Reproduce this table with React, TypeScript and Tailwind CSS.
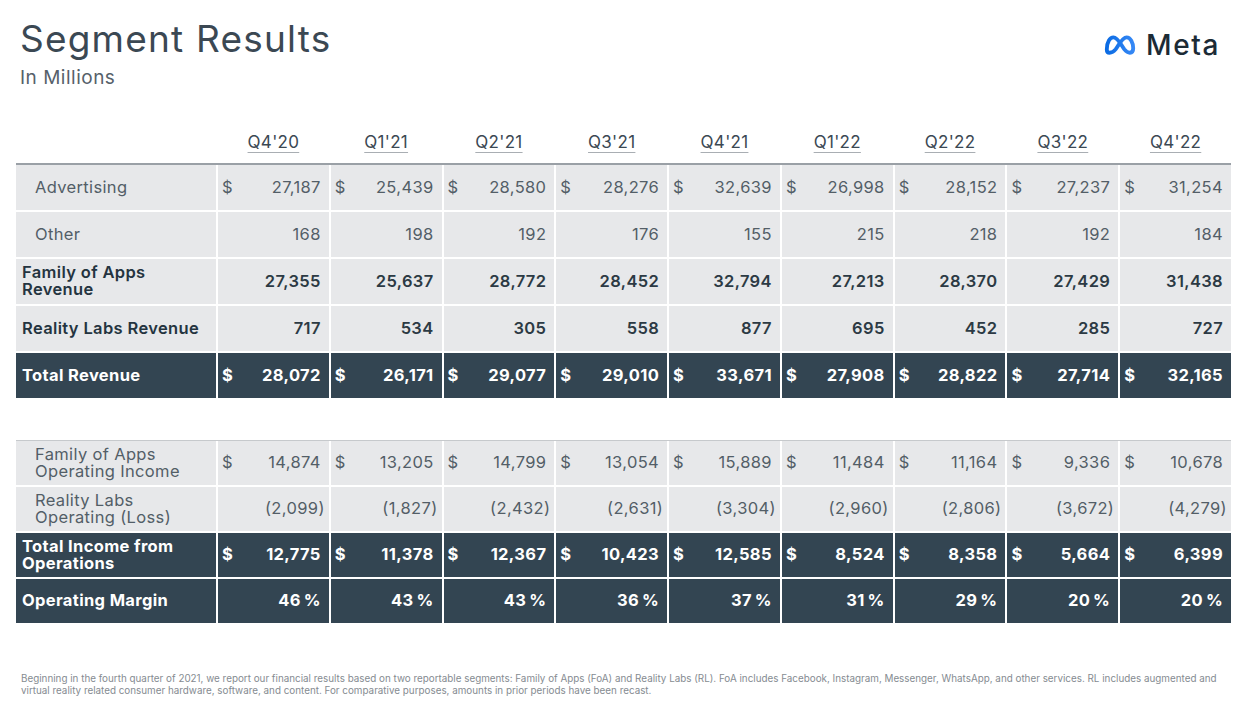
import React from "react"

const quarters = ["Q4'20", "Q1'21", "Q2'21", "Q3'21", "Q4'21", "Q1'22", "Q2'22", "Q3'22", "Q4'22"]

type Row = {
  label: string[]
  values: string[]
  dollar?: boolean
  kind: "sub" | "bold" | "dark"
}

const revenueRows: Row[] = [
  {
    label: ["Advertising"],
    kind: "sub",
    dollar: true,
    values: ["27,187", "25,439", "28,580", "28,276", "32,639", "26,998", "28,152", "27,237", "31,254"],
  },
  {
    label: ["Other"],
    kind: "sub",
    values: ["168", "198", "192", "176", "155", "215", "218", "192", "184"],
  },
  {
    label: ["Family of Apps", "Revenue"],
    kind: "bold",
    values: ["27,355", "25,637", "28,772", "28,452", "32,794", "27,213", "28,370", "27,429", "31,438"],
  },
  {
    label: ["Reality Labs Revenue"],
    kind: "bold",
    values: ["717", "534", "305", "558", "877", "695", "452", "285", "727"],
  },
  {
    label: ["Total Revenue"],
    kind: "dark",
    dollar: true,
    values: ["28,072", "26,171", "29,077", "29,010", "33,671", "27,908", "28,822", "27,714", "32,165"],
  },
]

const incomeRows: Row[] = [
  {
    label: ["Family of Apps", "Operating Income"],
    kind: "sub",
    dollar: true,
    values: ["14,874", "13,205", "14,799", "13,054", "15,889", "11,484", "11,164", "9,336", "10,678"],
  },
  {
    label: ["Reality Labs", "Operating (Loss)"],
    kind: "sub",
    values: ["(2,099)", "(1,827)", "(2,432)", "(2,631)", "(3,304)", "(2,960)", "(2,806)", "(3,672)", "(4,279)"],
  },
  {
    label: ["Total Income from", "Operations"],
    kind: "dark",
    dollar: true,
    values: ["12,775", "11,378", "12,367", "10,423", "12,585", "8,524", "8,358", "5,664", "6,399"],
  },
  {
    label: ["Operating Margin"],
    kind: "dark",
    values: ["46\u2009%", "43\u2009%", "43\u2009%", "36\u2009%", "37\u2009%", "31\u2009%", "29\u2009%", "20\u2009%", "20\u2009%"],
  },
]

function MetaLogo() {
  return (
    <div className="flex items-center gap-[9px]">
      <svg width="34" height="22" viewBox="0 0 60 40" fill="none">
        <defs>
          <linearGradient id="metaGrad" x1="0" y1="0" x2="60" y2="0" gradientUnits="userSpaceOnUse">
            <stop offset="0" stopColor="#0668E1" />
            <stop offset="1" stopColor="#3a8bf7" />
          </linearGradient>
        </defs>
        <path
          d="M6 28 C6 14 12 6 18 6 C26 6 32 20 38 28 C42 33 45 34 48 34 C52 34 54 31 54 26 C54 16 49 6 42 6 C34 6 28 20 22 28 C18 33 14 34 11 34 C8 34 6 32 6 28 Z"
          stroke="url(#metaGrad)"
          strokeWidth="7"
          strokeLinejoin="round"
        />
      </svg>
      <span className="text-[28px] leading-none font-medium text-[#1c2b36] tracking-[1.6px]">Meta</span>
    </div>
  )
}

function Cell({ value, dollar, kind }: { value: string; dollar?: boolean; kind: Row["kind"] }) {
  const neg = value.startsWith("(")
  const bg = kind === "dark" ? "bg-[#334552] text-white font-bold" : "bg-[#e7e8ea]"
  const color = kind === "sub" ? "text-[#535e67]" : kind === "bold" ? "text-[#2c3a44] font-semibold" : ""
  return (
    <div className={`flex items-center justify-between pl-[4px] ${neg ? "pr-[4px]" : "pr-[8px]"} ${bg} ${color}`}>
      <span>{dollar ? "$" : ""}</span>
      <span>{value}</span>
    </div>
  )
}

function LabelCell({ row }: { row: Row }) {
  if (row.kind === "sub") {
    return (
      <div className="flex flex-col justify-center bg-[#e7e8ea] pl-[19px] text-[#535e67] leading-[17px]">
        {row.label.map((l) => (
          <span key={l}>{l}</span>
        ))}
      </div>
    )
  }
  const cls =
    row.kind === "dark" ? "bg-[#334552] text-white font-bold" : "bg-[#e7e8ea] text-[#243440] font-semibold"
  return (
    <div className={`flex flex-col justify-center pl-[6px] leading-[17px] ${cls}`}>
      {row.label.map((l) => (
        <span key={l}>{l}</span>
      ))}
    </div>
  )
}

function Table({ rows, rowH, lineCls }: { rows: Row[]; rowH: string; lineCls: string }) {
  return (
    <div>
      <div className={lineCls} />
      <div
        className={`grid grid-cols-[200px_repeat(9,minmax(0,1fr))] gap-[2px] text-[16.5px] tracking-[0.35px] ${rowH}`}
      >
        {rows.map((row) => (
          <React.Fragment key={row.label.join(" ")}>
            <LabelCell row={row} />
            {row.values.map((v, i) => (
              <Cell key={i} value={v} dollar={row.dollar} kind={row.kind} />
            ))}
          </React.Fragment>
        ))}
      </div>
    </div>
  )
}

export default function App() {
  return (
    <div className="w-[1247px] h-[716px] bg-white overflow-hidden font-['Inter',sans-serif]">
      <div className="flex justify-between pl-[20px] pr-[27px]">
        <div>
          <h1 className="mt-[17px] text-[37px] leading-[44px] text-[#3b4853] font-normal tracking-[1.2px]">
            Segment Results
          </h1>
          <p className="mt-[6px] text-[19px] leading-[22px] text-[#56616a] tracking-[0.5px]">In Millions</p>
        </div>
        <div className="mt-[31px]">
          <MetaLogo />
        </div>
      </div>

      <div className="px-[16px] mt-[40px]">
        <div className="grid grid-cols-[200px_repeat(9,minmax(0,1fr))] gap-x-[2px] h-[34px] items-end">
          <div />
          {quarters.map((q) => (
            <div key={q} className="text-center pb-[11px] text-[17px] leading-[20px] text-[#3b4853] tracking-[0.3px]">
              <span className="underline decoration-[#a9aeb3] underline-offset-[4px]">{q}</span>
            </div>
          ))}
        </div>
        <Table rows={revenueRows} rowH="auto-rows-[45px]" lineCls="h-[1.5px] bg-[#9aa0a6]" />

        <div className="mt-[42px]">
          <Table rows={incomeRows} rowH="auto-rows-[44px]" lineCls="h-px bg-[#c6c9cc]" />
        </div>

        <p className="mt-[49px] pl-[5px] text-[9.85px] leading-[12px] text-[#858b91]">
          Beginning in the fourth quarter of 2021, we report our financial results based on two reportable segments:
          Family of Apps (FoA) and Reality Labs (RL). FoA includes Facebook, Instagram, Messenger, WhatsApp, and other
          services. RL includes augmented and virtual reality related consumer hardware, software, and content. For
          comparative purposes, amounts in prior periods have been recast.
        </p>
      </div>
    </div>
  )
}
